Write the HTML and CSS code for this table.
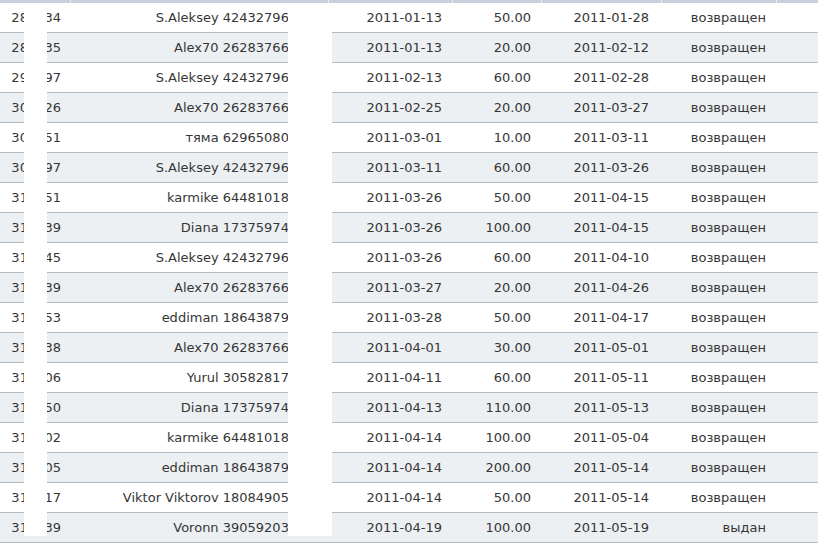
FILE: index.html
```html
<!DOCTYPE html>
<html lang="ru">
<head>
<meta charset="utf-8">
<title>Займы</title>
<link rel="stylesheet" href="styles.css">
</head>
<body>
<div class="wrap">
  <div class="grid">
    <div class="row head">
      <div class="c c1"></div><div class="c c2"></div><div class="c c3"></div><div class="c c4"></div><div class="c c5"></div><div class="c c6"></div><div class="c c7"></div>
    </div>
    <div class="row"><div class="c c1">280134</div><div class="c c2">S.Aleksey 424327968120</div><div class="c c3">2011-01-13</div><div class="c c4">50.00</div><div class="c c5">2011-01-28</div><div class="c c6">возвращен</div><div class="c c7"></div></div>
    <div class="row alt"><div class="c c1">280135</div><div class="c c2">Alex70 262837669341</div><div class="c c3">2011-01-13</div><div class="c c4">20.00</div><div class="c c5">2011-02-12</div><div class="c c6">возвращен</div><div class="c c7"></div></div>
    <div class="row"><div class="c c1">291297</div><div class="c c2">S.Aleksey 424327968120</div><div class="c c3">2011-02-13</div><div class="c c4">60.00</div><div class="c c5">2011-02-28</div><div class="c c6">возвращен</div><div class="c c7"></div></div>
    <div class="row alt"><div class="c c1">300426</div><div class="c c2">Alex70 262837669341</div><div class="c c3">2011-02-25</div><div class="c c4">20.00</div><div class="c c5">2011-03-27</div><div class="c c6">возвращен</div><div class="c c7"></div></div>
    <div class="row"><div class="c c1">300851</div><div class="c c2">тяма 629650802215</div><div class="c c3">2011-03-01</div><div class="c c4">10.00</div><div class="c c5">2011-03-11</div><div class="c c6">возвращен</div><div class="c c7"></div></div>
    <div class="row alt"><div class="c c1">301297</div><div class="c c2">S.Aleksey 424327968120</div><div class="c c3">2011-03-11</div><div class="c c4">60.00</div><div class="c c5">2011-03-26</div><div class="c c6">возвращен</div><div class="c c7"></div></div>
    <div class="row"><div class="c c1">310151</div><div class="c c2">karmike 644810189507</div><div class="c c3">2011-03-26</div><div class="c c4">50.00</div><div class="c c5">2011-04-15</div><div class="c c6">возвращен</div><div class="c c7"></div></div>
    <div class="row alt"><div class="c c1">310239</div><div class="c c2">Diana 173759742688</div><div class="c c3">2011-03-26</div><div class="c c4">100.00</div><div class="c c5">2011-04-15</div><div class="c c6">возвращен</div><div class="c c7"></div></div>
    <div class="row"><div class="c c1">310345</div><div class="c c2">S.Aleksey 424327968120</div><div class="c c3">2011-03-26</div><div class="c c4">60.00</div><div class="c c5">2011-04-10</div><div class="c c6">возвращен</div><div class="c c7"></div></div>
    <div class="row alt"><div class="c c1">310439</div><div class="c c2">Alex70 262837669341</div><div class="c c3">2011-03-27</div><div class="c c4">20.00</div><div class="c c5">2011-04-26</div><div class="c c6">возвращен</div><div class="c c7"></div></div>
    <div class="row"><div class="c c1">310553</div><div class="c c2">eddiman 186438790410</div><div class="c c3">2011-03-28</div><div class="c c4">50.00</div><div class="c c5">2011-04-17</div><div class="c c6">возвращен</div><div class="c c7"></div></div>
    <div class="row alt"><div class="c c1">310738</div><div class="c c2">Alex70 262837669341</div><div class="c c3">2011-04-01</div><div class="c c4">30.00</div><div class="c c5">2011-05-01</div><div class="c c6">возвращен</div><div class="c c7"></div></div>
    <div class="row"><div class="c c1">311006</div><div class="c c2">Yurul 305828171593</div><div class="c c3">2011-04-11</div><div class="c c4">60.00</div><div class="c c5">2011-05-11</div><div class="c c6">возвращен</div><div class="c c7"></div></div>
    <div class="row alt"><div class="c c1">311150</div><div class="c c2">Diana 173759742688</div><div class="c c3">2011-04-13</div><div class="c c4">110.00</div><div class="c c5">2011-05-13</div><div class="c c6">возвращен</div><div class="c c7"></div></div>
    <div class="row"><div class="c c1">311202</div><div class="c c2">karmike 644810189507</div><div class="c c3">2011-04-14</div><div class="c c4">100.00</div><div class="c c5">2011-05-04</div><div class="c c6">возвращен</div><div class="c c7"></div></div>
    <div class="row alt"><div class="c c1">311205</div><div class="c c2">eddiman 186438790410</div><div class="c c3">2011-04-14</div><div class="c c4">200.00</div><div class="c c5">2011-05-14</div><div class="c c6">возвращен</div><div class="c c7"></div></div>
    <div class="row"><div class="c c1">311217</div><div class="c c2">Viktor Viktorov 180849052376</div><div class="c c3">2011-04-14</div><div class="c c4">50.00</div><div class="c c5">2011-05-14</div><div class="c c6">возвращен</div><div class="c c7"></div></div>
    <div class="row alt"><div class="c c1">311339</div><div class="c c2">Voronn 390592033814</div><div class="c c3">2011-04-19</div><div class="c c4">100.00</div><div class="c c5">2011-05-19</div><div class="c c6">выдан</div><div class="c c7"></div></div>
  </div>
  <div class="mask mask-id"></div>
  <div class="mask mask-wm"></div>
</div>
</body>
</html>
```

FILE: styles.css
```css
html, body {
  margin: 0;
  padding: 0;
  background: #ffffff;
  overflow: hidden;
}

.wrap {
  position: relative;
  width: 818px;
  height: 543px;
  overflow: hidden;
}

.grid {
  display: flex;
  flex-direction: column;
  width: 900px;
  font-family: "DejaVu Sans", Verdana, sans-serif;
  font-size: 13px;
  color: #363636;
}

.row {
  display: flex;
  height: 30px;
  box-sizing: border-box;
  border-bottom: 1px solid #b5babf;
  background: #ffffff;
}

.row.alt {
  background: #edf0f3;
}

.row.head {
  height: 3px;
  border-bottom: 0;
  background: #c7d2dd;
}

.c {
  box-sizing: border-box;
  flex: none;
  display: flex;
  align-items: center;
  justify-content: flex-end;
  padding-right: 11px;
  white-space: nowrap;
  overflow: hidden;
}

.head .c {
  border-right: 1px solid #e9eef3;
}

.c1 { width: 71px; padding-right: 10px; }
.c2 { width: 258px; padding-right: 7px; }
.c3 { width: 124px; }
.c4 { width: 89px; }
.c5 { width: 120px; padding-right: 13px; }
.c6 { width: 115px; }
.c7 { width: 123px; }

.mask {
  position: absolute;
  background: #ffffff;
  top: 3px;
  height: 533px;
}

.mask-id {
  left: 24px;
  width: 23px;
}

.mask-wm {
  left: 288px;
  width: 44px;
}
```
